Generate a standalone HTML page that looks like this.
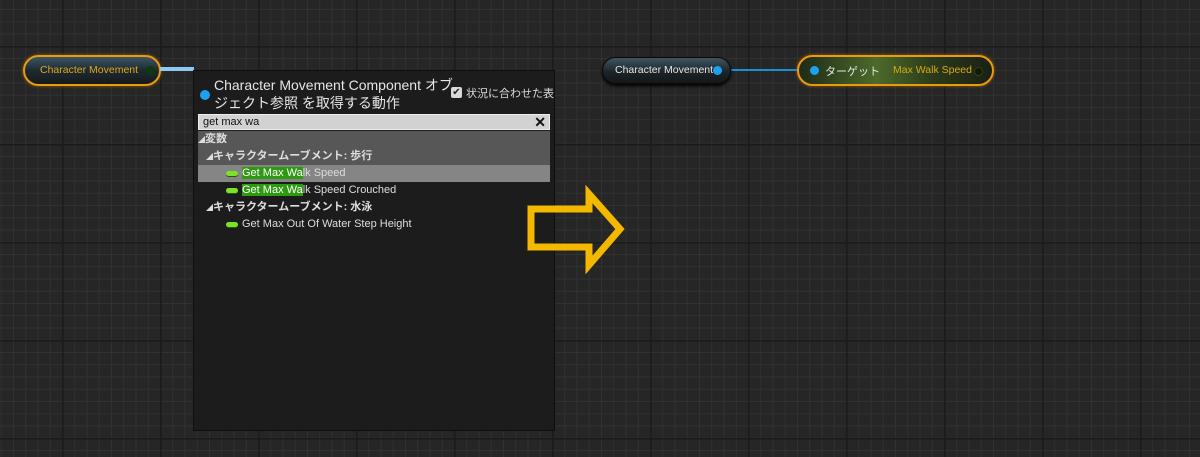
<!DOCTYPE html>
<html><head><meta charset="utf-8"><style>
html,body{margin:0;padding:0}
body{width:1200px;height:457px;overflow:hidden;position:relative;background:#262626;font-family:"Liberation Sans","Noto Sans CJK JP",sans-serif;
background-image:
linear-gradient(to right,#1b1b1b 0,#1b1b1b 1.5px,transparent 1.5px),
linear-gradient(to bottom,#1b1b1b 0,#1b1b1b 1.5px,transparent 1.5px),
linear-gradient(to right,#313131 0,#313131 1px,transparent 1px),
linear-gradient(to bottom,#313131 0,#313131 1px,transparent 1px);
background-size:98px 98px,98px 98px,12.25px 12.25px,12.25px 12.25px;
background-position:62px 0,0 46px,0.75px 0,0 9px;}
.abs{position:absolute}
.node{position:absolute;border-radius:16px;box-sizing:border-box;font-size:11px;}
.panel{left:193px;top:70px;width:362px;height:361px;background:#1c1c1c;border:1px solid #0e0e0e;box-sizing:border-box;}
.row{position:absolute;left:4px;width:352px;height:17px;font-size:11px;color:#ddd;line-height:17px;white-space:nowrap}
.pill{display:inline-block;width:12px;height:5px;background:#7de02a;border-radius:3px;vertical-align:middle;margin-right:4px;box-shadow:0 1px 0 #2a5a00}
.hl{background:#2e9a12;color:#fff}
</style></head><body>

<!-- left node -->
<div class="node" style="left:23px;top:55px;width:138px;height:31px;border:2px solid #e89a10;background:linear-gradient(#3a5566,#1e2a30 50%,#151a1c);box-shadow:0 0 3px #a06000;">
<div class="abs" style="left:15px;top:7px;color:#e0a81a;font-size:10.5px">Character Movement</div>
<div class="abs" style="left:121px;top:9px;width:9px;height:9px;border-radius:50%;background:#0b3a10;"></div>
</div>
<div class="abs" style="left:160px;top:67px;width:34px;height:4px;background:#8fc8f0"></div>

<!-- panel -->
<div class="abs panel">
<div class="abs" style="left:6px;top:19px;width:10px;height:10px;border-radius:50%;background:#1aa2f0"></div>
<div class="abs" style="left:20px;top:5px;color:#e6e6e6;font-size:14px;line-height:18px;width:250px">Character Movement Component オブ<br>ジェクト参照 を取得する動作</div>
<div class="abs" style="left:257px;top:16px;width:11px;height:11px;background:#d8d8d8;border-radius:2px;color:#222;font-size:10px;line-height:11px;text-align:center">✔</div>
<div class="abs" style="left:272px;top:14px;color:#ddd;font-size:11px;white-space:nowrap;width:88px;overflow:hidden">状況に合わせた表示</div>
<div class="abs" style="left:4px;top:43px;width:352px;height:16px;background:#d2d2d2;border:1px solid #eee;box-sizing:border-box;font-size:11px;line-height:14px;color:#111;padding-left:4px">get max wa<span style="position:absolute;right:3px;top:0;font-size:14px;font-weight:bold">✕</span></div>
<div class="abs" style="left:4px;top:60px;width:352px;height:34px;background:#575757"></div>
<div class="row" style="top:60px;font-weight:bold;color:#ddd"><span style="font-size:7px">◢</span>変数</div>
<div class="row" style="top:77px;font-weight:bold;padding-left:8px"><span style="font-size:7px">◢</span>キャラクタームーブメント: 歩行</div>
<div class="row" style="top:94px;background:#858585;padding-left:28px;box-sizing:border-box"><span class="pill"></span><span class="hl">Get Max Wa</span>lk Speed</div>
<div class="row" style="top:111px;padding-left:28px;box-sizing:border-box"><span class="pill"></span><span class="hl">Get Max Wa</span>lk Speed Crouched</div>
<div class="row" style="top:128px;font-weight:bold;padding-left:8px"><span style="font-size:7px">◢</span>キャラクタームーブメント: 水泳</div>
<div class="row" style="top:145px;padding-left:28px;box-sizing:border-box"><span class="pill"></span>Get Max Out Of Water Step Height</div>
</div>

<!-- arrow -->
<svg class="abs" style="left:0;top:0" width="1200" height="457">
<polygon points="531,209 589,209 589,194 620,229 589,265 589,247 531,247" fill="none" stroke="#f5b800" stroke-width="7" stroke-linejoin="miter"/>
<line x1="728" y1="70" x2="812" y2="70" stroke="#1a8fd8" stroke-width="2"/>
</svg>

<!-- right nodes -->
<div class="node" style="left:602px;top:57px;width:129px;height:27px;border:1px solid #0a0a0a;background:linear-gradient(#3f5563,#1c2428 55%,#141718);box-shadow:0 2px 3px #000;">
<div class="abs" style="left:12px;top:6px;color:#e6e6e6;font-size:10.5px">Character Movement</div>
<div class="abs" style="left:110px;top:8px;width:9px;height:9px;border-radius:50%;background:#1aa2f0"></div>
</div>
<div class="node" style="left:797px;top:55px;width:197px;height:31px;border:2px solid #e89a10;background:linear-gradient(to right,#1f2a18,#4c6a2a 40%,#2a3a1a 70%,#1a2014);box-shadow:0 0 3px #a06000;">
<div class="abs" style="left:11px;top:9px;width:9px;height:9px;border-radius:50%;background:#1aa2f0"></div>
<div class="abs" style="left:26px;top:6px;color:#e6e6e6;font-size:11px">ターゲット</div>
<div class="abs" style="left:94px;top:7px;color:#d8a818;font-size:10.5px">Max Walk Speed</div>
<div class="abs" style="left:175px;top:10px;width:7px;height:7px;border-radius:50%;border:1px solid #2a4a10;background:#11180c"></div>
</div>

</body></html>
